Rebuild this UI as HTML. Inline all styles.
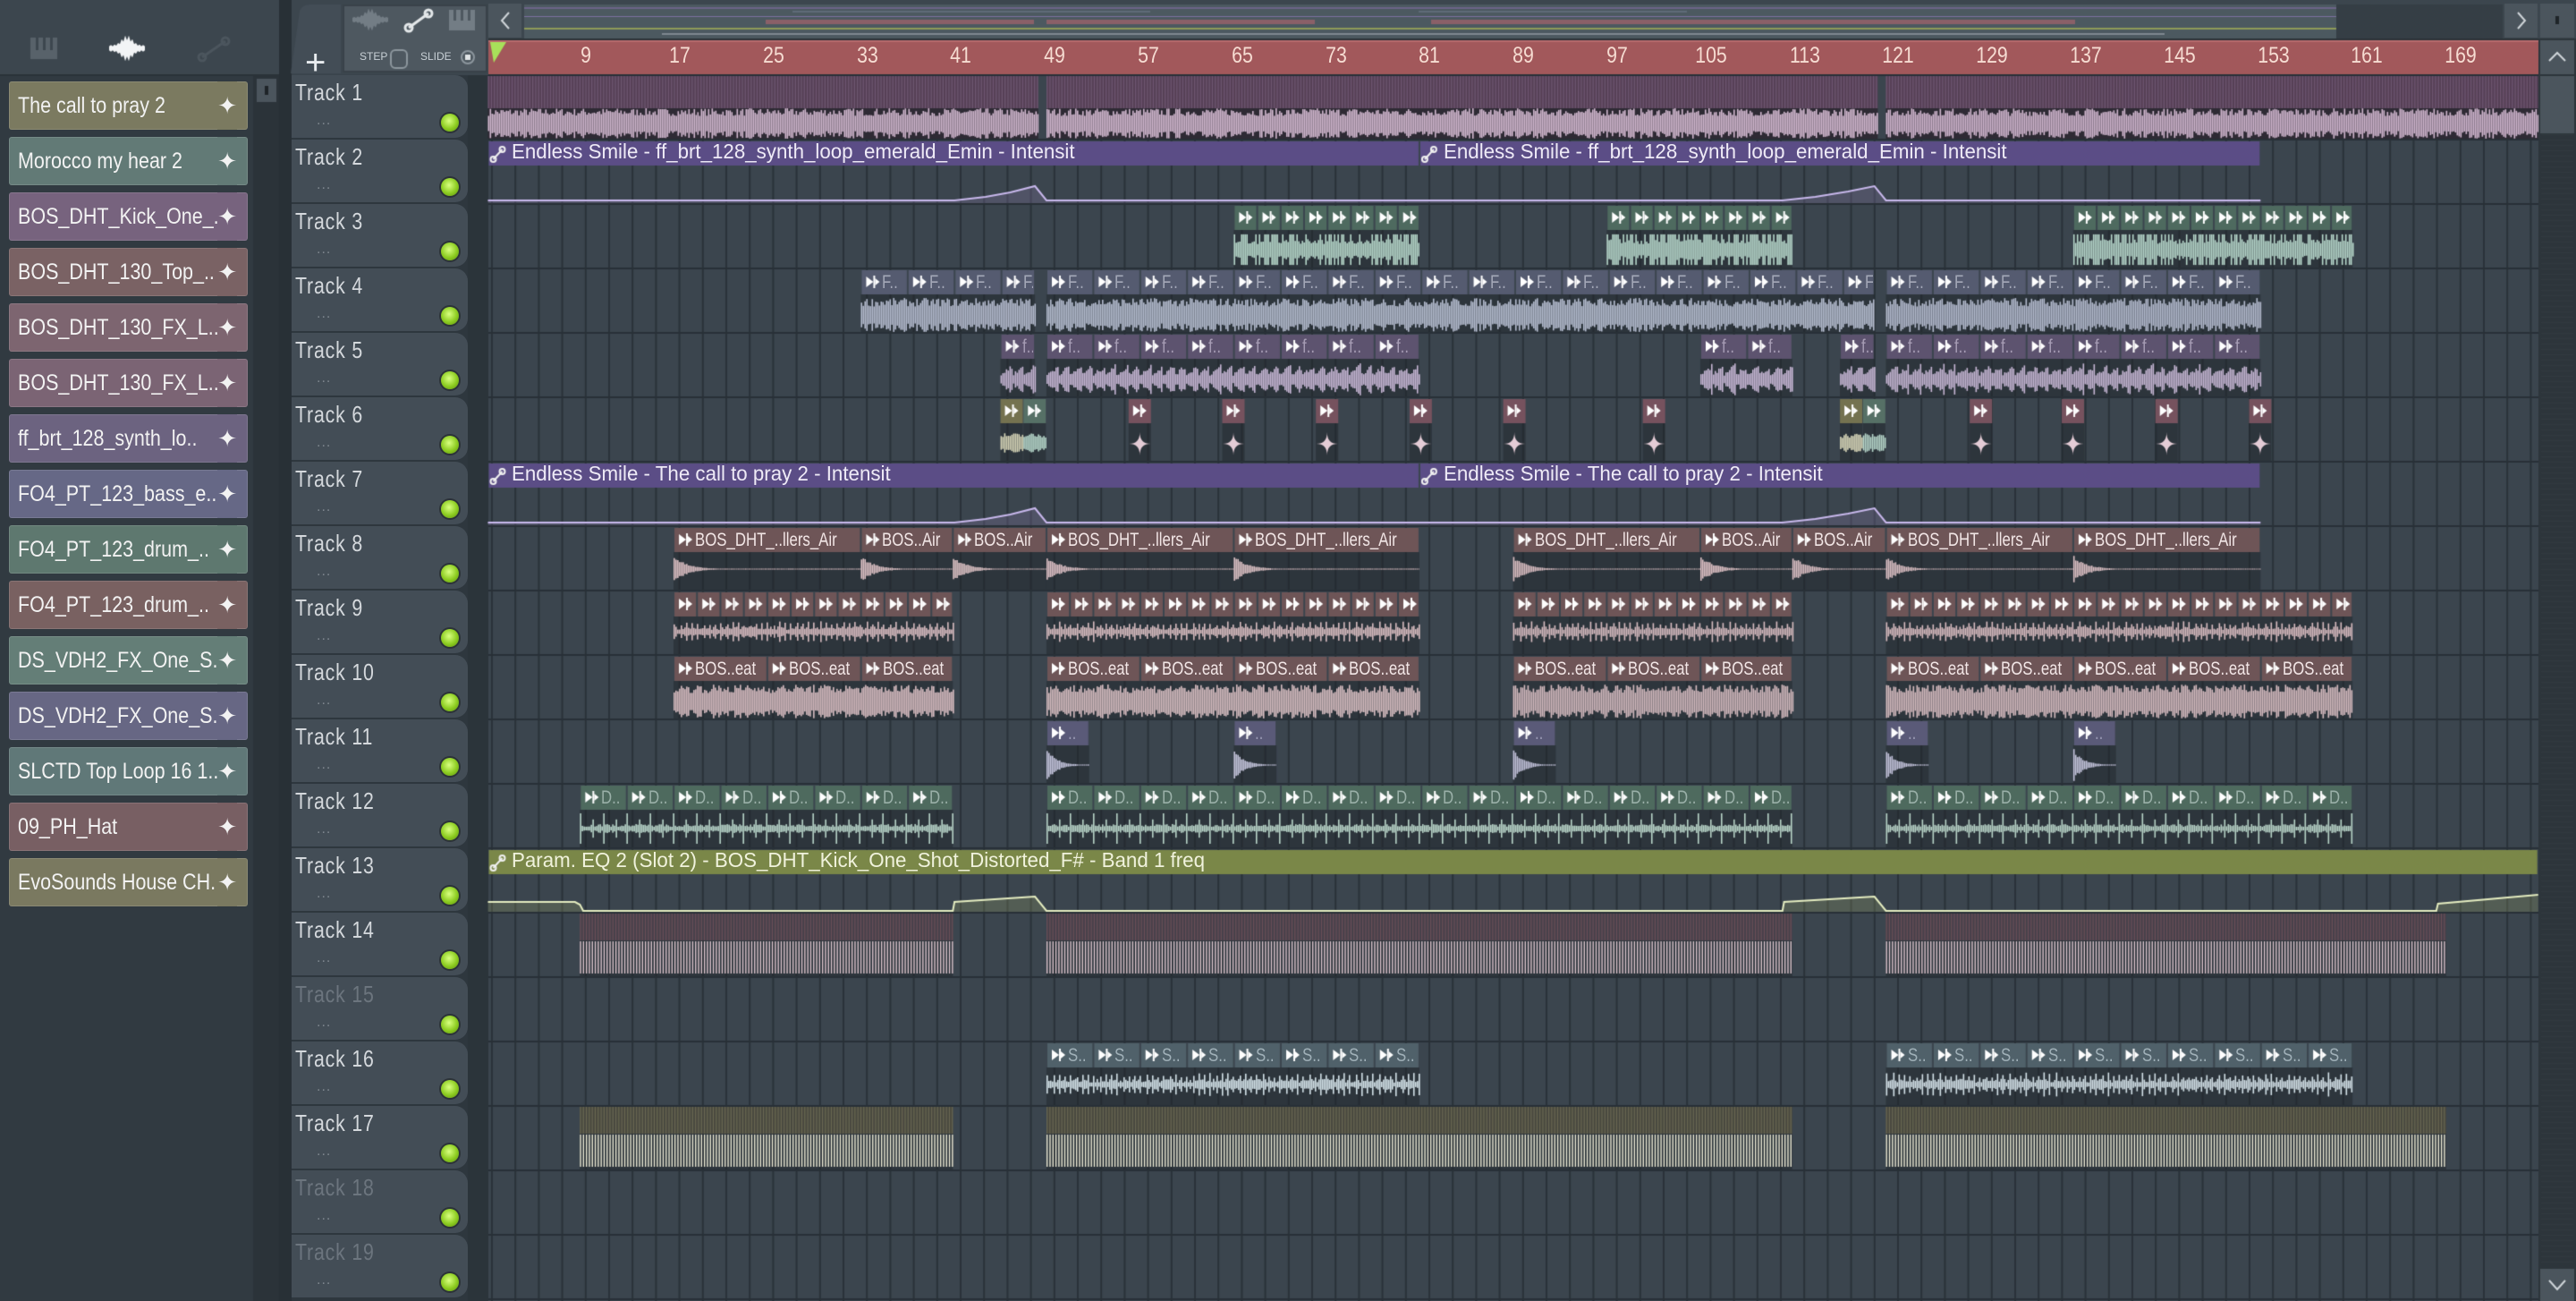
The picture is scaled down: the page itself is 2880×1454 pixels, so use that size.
<!DOCTYPE html>
<html><head><meta charset="utf-8">
<style>
*{margin:0;padding:0;box-sizing:border-box}
html,body{width:2880px;height:1454px;overflow:hidden;background:#3a444c;font-family:"Liberation Sans",sans-serif}
#cv{position:absolute;left:0;top:0}
.a{position:absolute;white-space:nowrap}
.bi{position:absolute;left:10px;width:267px;height:54px;border-radius:3px;color:#f2f2f2;font-size:25px;line-height:54px;box-shadow:inset 0 0 0 1px rgba(255,255,255,.12);overflow:hidden}
.bi em{position:absolute;left:10px;top:0;font-style:normal;white-space:nowrap;transform:scaleX(.86);transform-origin:left}
.bi span{position:absolute;right:12px;top:0;font-size:26px;background:inherit}
.th{position:absolute;left:326px;width:197px;height:70px;background:#434d56;border-radius:0 14px 14px 0}
.th b{position:absolute;left:4px;top:4px;font-weight:normal;font-size:26px;color:#d4d8dc;letter-spacing:1px;white-space:nowrap;transform:scaleX(.82);transform-origin:left}
.th i{position:absolute;left:28px;top:42px;font-style:normal;font-size:16px;color:#7e868e;letter-spacing:1px}
.th u{position:absolute;left:167px;top:43px;width:20px;height:20px;border-radius:50%;background:radial-gradient(circle at 45% 40%,#d8ff80,#8ccc20 55%,#5a8a10);box-shadow:0 0 0 2px #2c3338}
.th.d b{color:#6c757e}
.rl{position:absolute;top:48px;font-size:25px;color:#f6dcd2;transform:translateX(-50%) scaleX(.85)}
.cl{position:absolute;font-size:21px;line-height:27px;white-space:nowrap;overflow:hidden}
.cl span{display:inline-block;transform:scaleX(.8);transform-origin:left}
.al{position:absolute;font-size:23px;line-height:27px;white-space:nowrap;transform:scaleX(.97);transform-origin:left}
</style></head><body>
<canvas id="cv" width="2880" height="1454"></canvas>

<div class="bi" style="top:91px;background:#7b7a60"><em>The call to pray 2</em><span>✦</span></div>
<div class="bi" style="top:153px;background:#627a76"><em>Morocco my hear 2</em><span>✦</span></div>
<div class="bi" style="top:215px;background:#77637e"><em>BOS_DHT_Kick_One_..</em><span>✦</span></div>
<div class="bi" style="top:277px;background:#7a6264"><em>BOS_DHT_130_Top_..</em><span>✦</span></div>
<div class="bi" style="top:339px;background:#7d6570"><em>BOS_DHT_130_FX_L..</em><span>✦</span></div>
<div class="bi" style="top:401px;background:#7b6474"><em>BOS_DHT_130_FX_L..</em><span>✦</span></div>
<div class="bi" style="top:463px;background:#6c6380"><em>ff_brt_128_synth_lo..</em><span>✦</span></div>
<div class="bi" style="top:525px;background:#666886"><em>FO4_PT_123_bass_e..</em><span>✦</span></div>
<div class="bi" style="top:587px;background:#5e786f"><em>FO4_PT_123_drum_..</em><span>✦</span></div>
<div class="bi" style="top:649px;background:#796161"><em>FO4_PT_123_drum_..</em><span>✦</span></div>
<div class="bi" style="top:711px;background:#647e77"><em>DS_VDH2_FX_One_S..</em><span>✦</span></div>
<div class="bi" style="top:773px;background:#676784"><em>DS_VDH2_FX_One_S..</em><span>✦</span></div>
<div class="bi" style="top:835px;background:#607878"><em>SLCTD Top Loop 16 1..</em><span>✦</span></div>
<div class="bi" style="top:897px;background:#785f63"><em>09_PH_Hat</em><span>✦</span></div>
<div class="bi" style="top:959px;background:#7a7960"><em>EvoSounds House CH..</em><span>✦</span></div>

<div class="a" style="left:341px;top:48px;font-size:40px;color:#e8ecef">+</div>
<div class="a" style="left:402px;top:56px;font-size:12px;color:#c8d0d6">STEP</div>
<div class="a" style="left:470px;top:56px;font-size:12px;color:#c8d0d6">SLIDE</div>

<div class="rl" style="left:655px">9</div><div class="rl" style="left:760px">17</div><div class="rl" style="left:865px">25</div><div class="rl" style="left:970px">33</div><div class="rl" style="left:1074px">41</div><div class="rl" style="left:1179px">49</div><div class="rl" style="left:1284px">57</div><div class="rl" style="left:1389px">65</div><div class="rl" style="left:1494px">73</div><div class="rl" style="left:1598px">81</div><div class="rl" style="left:1703px">89</div><div class="rl" style="left:1808px">97</div><div class="rl" style="left:1913px">105</div><div class="rl" style="left:2018px">113</div><div class="rl" style="left:2122px">121</div><div class="rl" style="left:2227px">129</div><div class="rl" style="left:2332px">137</div><div class="rl" style="left:2437px">145</div><div class="rl" style="left:2542px">153</div><div class="rl" style="left:2646px">161</div><div class="rl" style="left:2751px">169</div>

<div class="th" style="top:84px"><b>Track 1</b><i>...</i><u></u></div>
<div class="th" style="top:156px"><b>Track 2</b><i>...</i><u></u></div>
<div class="th" style="top:228px"><b>Track 3</b><i>...</i><u></u></div>
<div class="th" style="top:300px"><b>Track 4</b><i>...</i><u></u></div>
<div class="th" style="top:372px"><b>Track 5</b><i>...</i><u></u></div>
<div class="th" style="top:444px"><b>Track 6</b><i>...</i><u></u></div>
<div class="th" style="top:516px"><b>Track 7</b><i>...</i><u></u></div>
<div class="th" style="top:588px"><b>Track 8</b><i>...</i><u></u></div>
<div class="th" style="top:660px"><b>Track 9</b><i>...</i><u></u></div>
<div class="th" style="top:732px"><b>Track 10</b><i>...</i><u></u></div>
<div class="th" style="top:804px"><b>Track 11</b><i>...</i><u></u></div>
<div class="th" style="top:876px"><b>Track 12</b><i>...</i><u></u></div>
<div class="th" style="top:948px"><b>Track 13</b><i>...</i><u></u></div>
<div class="th" style="top:1020px"><b>Track 14</b><i>...</i><u></u></div>
<div class="th d" style="top:1092px"><b>Track 15</b><i>...</i><u></u></div>
<div class="th" style="top:1164px"><b>Track 16</b><i>...</i><u></u></div>
<div class="th" style="top:1236px"><b>Track 17</b><i>...</i><u></u></div>
<div class="th d" style="top:1308px"><b>Track 18</b><i>...</i><u></u></div>
<div class="th d" style="top:1380px"><b>Track 19</b><i>...</i><u></u></div>

<div class="al" style="left:572px;top:156px;color:#eeeaf6">Endless Smile - ff_brt_128_synth_loop_emerald_Emin - Intensit</div>
<div class="al" style="left:1614px;top:156px;color:#eeeaf6">Endless Smile - ff_brt_128_synth_loop_emerald_Emin - Intensit</div>
<div class="al" style="left:572px;top:516px;color:#eeeaf6">Endless Smile - The call to pray 2 - Intensit</div>
<div class="al" style="left:1614px;top:516px;color:#eeeaf6">Endless Smile - The call to pray 2 - Intensit</div>
<div class="al" style="left:572px;top:948px;color:#f0f2dc">Param. EQ 2 (Slot 2) - BOS_DHT_Kick_One_Shot_Distorted_F# - Band 1 freq</div>

<div id="lb"></div>

<script>
const S=1.8367,P=x=>x*S;
const c=document.getElementById('cv'),g=c.getContext('2d');
function R(x,y,w,h,col){g.fillStyle=col;g.fillRect(x,y,w,h);}
let seed=7;function rnd(){seed=(seed*16807)%2147483647;return seed/2147483647;}
const lb=document.getElementById('lb');
function label(x,y,w,t,col){const d=document.createElement('div');d.className='cl';d.style.left=x+'px';d.style.top=y+'px';d.style.width=w+'px';d.style.color=col;const s=document.createElement('span');s.textContent=t;d.appendChild(s);lb.appendChild(d);}

R(0,0,2880,84,'#3c464e');
R(0,83,312,2,'#2a3238');
R(0,85,283,1369,'#313a41');
R(283,85,29,1369,'#2b3339');
R(287,88,22,26,'#4b555d');R(296,96,4,10,'#1e2428');
R(312,0,14,1454,'#283036');
R(326,84,220,1370,'#2e373e');
R(523,84,23,1370,'#2b343a');
R(34,42,30,24,'#58626a');R(40,42,3,14,'#3c464e');R(48,42,3,14,'#3c464e');R(56,42,3,14,'#3c464e');
function wav(cx,cy,w,h,col){g.fillStyle=col;g.beginPath();g.moveTo(cx-w/2,cy);for(let i=0;i<=20;i++){const x=cx-w/2+i*w/20;const a=h/2*(0.25+0.75*Math.exp(-Math.pow((i-10)/4,2)))*(i%2?1:0.6);g.lineTo(x,cy-a);}for(let i=20;i>=0;i--){const x=cx-w/2+i*w/20;const a=h/2*(0.25+0.75*Math.exp(-Math.pow((i-10)/4,2)))*(i%2?1:0.6);g.lineTo(x,cy+a);}g.fill();}
wav(142,54,40,30,'#f2f4f6');
function autoIcon(x1,y1,x2,y2,r,col,lw){g.strokeStyle=col;g.lineWidth=lw;g.beginPath();g.moveTo(x1,y1);g.lineTo(x2,y2);g.stroke();g.beginPath();g.arc(x1,y1,r,0,7);g.stroke();g.beginPath();g.arc(x2,y2,r,0,7);g.stroke();}
autoIcon(226,64,252,46,4,'#4c565e',3);
g.fillStyle='#434d56';g.beginPath();g.moveTo(325,82);g.lineTo(335,12);g.quadraticCurveTo(338,5,346,5);g.lineTo(381,5);g.lineTo(381,82);g.fill();
R(383,5,162,76,'#4e5860');g.strokeStyle='#394249';g.lineWidth=2;g.strokeRect(384,6,160,74);
wav(414,22,40,26,'#737d85');
autoIcon(457,31,479,15,4,'#e4e8ea',3);
R(502,11,29,23,'#737d85');R(507,11,3,12,'#4e5860');R(515,11,3,12,'#4e5860');R(523,11,3,12,'#4e5860');
g.strokeStyle='#8d979e';g.lineWidth=2;g.beginPath();g.roundRect(437,56,18,20,5);g.stroke();
g.beginPath();g.arc(523,64,7,0,7);g.stroke();R(520,61,6,6,'#e0e4e6');
R(546,4,37,38,'#4b555d');g.strokeStyle='#d0d6da';g.lineWidth=2;g.beginPath();g.moveTo(569,14);g.lineTo(561,23);g.lineTo(569,32);g.stroke();
R(2800,4,37,38,'#4b555d');g.beginPath();g.moveTo(2815,14);g.lineTo(2823,23);g.lineTo(2815,32);g.stroke();
R(2840,4,38,38,'#4b555d');R(2857,18,4,9,'#1e2428');
R(586,5,2026,38,'#4c5960');R(2612,5,186,38,'#353e45');
R(586,8,2026,2,'#6d6488');R(586,18,2026,1,'#7c70a0');
R(586+300,12,400,2,'#5f6a78');R(586+1000,12,300,2,'#5f6a78');
R(856,22,300,5,'#8a6068');R(1170,22,300,5,'#8a6068');R(1600,22,300,5,'#8a6068');R(1900,22,420,5,'#8a6068');
R(586,31,2026,2,'#8e9a58');R(740,37,1000,2,'#7f8890');R(1720,37,700,2,'#7f8890');
R(546,43,2292,2,'#2b3338');R(546,45,2292,38,'#a2585b');R(546,45,2292,2,'#b86a6c');
g.fillStyle='#a8e05a';g.beginPath();g.moveTo(548,47);g.lineTo(566,47);g.lineTo(552,70);g.fill();
R(2838,43,42,1411,'#2d353b');R(2840,45,38,38,'#4b555d');g.beginPath();g.moveTo(2850,68);g.lineTo(2859,59);g.lineTo(2868,68);g.stroke();
R(2840,85,38,64,'#4b555d');R(2840,1418,38,36,'#4b555d');g.beginPath();g.moveTo(2850,1431);g.lineTo(2859,1441);g.lineTo(2868,1431);g.stroke();
for(let y=150;y<1416;y+=6){R(2841,y,36,1,'#313a40');}

R(546,84,2292,1370,'#3b454e');
for(let k=0;;k++){const x=550+k*26.2;if(x>2838)break;R(x-1,84,2,1370,'#2a3239');}
for(let i=0;i<=19;i++){R(546,84+72*i-1,2292,2,'#283037');}

function Y(r){return 84+72*(r-1);}
function icon(x,cy,col){g.fillStyle=col||'#ffffff';g.beginPath();g.moveTo(x,cy-6);g.lineTo(x+8,cy);g.lineTo(x,cy+6);g.fill();R(x+8,cy-7,2,14,col||'#fff');g.beginPath();g.moveTo(x+10,cy-4);g.lineTo(x+15,cy);g.lineTo(x+10,cy+4);g.fill();}
function wave(s,e,top,h,type,col,segStart,segLen){g.fillStyle=col;const cy=top+h/2;
 for(let x=s;x<e;x+=2){let a;
  if(type=='noise')a=h/2*(0.5+0.5*rnd());
  else if(type=='spiky')a=h/2*(rnd()<0.5?0.95:0.35+0.3*rnd());
  else if(type=='pump'){const p=((x-s)%13)/13;a=h/2*(0.35+0.65*p)*(0.6+0.4*rnd());}
  else if(type=='decay'){const t=(x-segStart)/segLen;a=h/2*Math.max(Math.exp(-4*t),0.04)*(0.7+0.3*rnd());}
  else if(type=='kick'){const p=(x-s)%13;a=p<2?h/2*(((x-s)%26)<2?1:0.6):h/2*0.18*rnd()+2;}
  else if(type=='hat'){const p=(x-s)%6.5;a=p<2?h/2*(0.5+0.4*rnd()):h/2*0.3*rnd()+2;}
  g.fillRect(x,cy-a,1.6,2*a);}}
function hclip(r,x1p,x2p,o){const x1=P(x1p),x2=P(x2p),y0=Y(r);
 R(x1,y0+29,x2-x1,42,'rgba(34,40,46,0.55)');
 for(let s=x1;s<x2-2;s+=o.seg){const e=Math.min(s+o.seg,x2);
  R(s+1,y0+2,e-s-2,27,o.hc);icon(s+6,y0+15);
  if(o.label&&e-s>30)label(s+24,y0+2,e-s-26,o.label,o.lc);
  if(o.type=='decay')wave(s,e,y0+33,o.wh||34,'decay',o.wc,s,o.dl||(e-s));
 }
 if(o.type!='decay')wave(x1,x2,y0+33,o.wh||34,o.type,o.wc);
}
function stripes(r,x1p,x2p,topBg,topLn,botLn){const x1=P(x1p),x2=P(x2p),y0=Y(r);
 R(x1,y0+1,x2-x1,30,topBg);for(let x=x1;x<x2;x+=3.3)R(x,y0+1,1.2,30,topLn);
 R(x1,y0+31,x2-x1,40,'rgba(34,40,46,0.55)');for(let x=x1;x<x2;x+=3.3)R(x,y0+32,1.4,36,botLn);}
function aclip(r,x1p,x2p,col){const x1=P(x1p),x2=P(x2p),y0=Y(r);R(x1+1,y0+2,x2-x1-2,27,col);autoIcon(x1+6,y0+22,x1+16,y0+11,3,'#f0f0f0',2);}
function aline(r,pts,col,fill){const y0=Y(r);g.fillStyle=fill;g.beginPath();g.moveTo(P(pts[0][0]),y0+71);pts.forEach(p=>g.lineTo(P(p[0]),y0+p[1]));g.lineTo(P(pts[pts.length-1][0]),y0+71);g.fill();
 g.strokeStyle=col;g.lineWidth=2;g.beginPath();pts.forEach((p,i)=>i?g.lineTo(P(p[0]),y0+p[1]):g.moveTo(P(p[0]),y0+p[1]));g.stroke();}

[[297,632],[637,1143],[1148,1545]].forEach(([a,b])=>{const x1=P(a),x2=P(b),y0=Y(1);
 R(x1,y0+1,x2-x1,36,'#553f55');for(let x=x1;x<x2;x+=3.3)R(x,y0+1,1.3,36,'#6d5670');
 R(x1,y0+37,x2-x1,34,'#2e2a34');wave(x1,x2,y0+37,34,'noise','#d2b8d0');});
[2,7].forEach(r=>{aline(r,[[297,68],[581,68],[600,64],[615,59],[630,52],[637,68],[1085,68],[1105,64],[1125,58],[1141,52],[1148,68],[1376,68]],'#c8b8ec','rgba(120,110,150,0.35)');aclip(r,297,864,'#5b4d86');aclip(r,864,1376,'#5b4d86');});
[[751,864],[978,1091],[1262,1432]].forEach(([a,b])=>hclip(3,a,b,{seg:26.2,hc:'#4e6a5f',type:'spiky',wc:'#b6d6ca',wh:36}));
[[524,630],[637,1141],[1148,1376]].forEach(([a,b])=>hclip(4,a,b,{seg:52.4,hc:'#555b70',label:'F..',lc:'#a4a8b8',type:'noise',wc:'#b5bccf',wh:38}));
[[609,630],[637,864],[1035,1091],[1120,1141],[1148,1376]].forEach(([a,b])=>hclip(5,a,b,{seg:52.4,hc:'#5d536f',label:'f..',lc:'#a69cb4',type:'pump',wc:'#c6b6d4',wh:38}));
function small(r,xp,hc,kind,wc){const x1=P(xp),w=25,y0=Y(r);R(x1,y0+29,w,42,'rgba(34,40,46,0.55)');R(x1,y0+2,w,27,hc);icon(x1+5,y0+15);
 if(kind=='star'){const cx=x1+w/2,cy=y0+52;g.fillStyle=wc;g.beginPath();g.moveTo(cx,cy-13);g.quadraticCurveTo(cx,cy,cx+12,cy);g.quadraticCurveTo(cx,cy,cx,cy+13);g.quadraticCurveTo(cx,cy,cx-12,cy);g.quadraticCurveTo(cx,cy,cx,cy-13);g.fill();}
 else wave(x1,x1+w,y0+40,22,'noise',wc);}
small(6,609,'#747250','w','#d8d6b8');small(6,623,'#567066','w','#b8d8cc');
small(6,1120,'#747250','w','#d8d6b8');small(6,1134,'#567066','w','#b8d8cc');
[687,744,801,858,915,1000,1199,1255,1312,1369].forEach(x=>small(6,x,'#76525e','star','#e4ccd6'));
[[410,524],[524,580],[580,637],[637,751],[751,864],[921,1035],[1035,1091],[1091,1148],[1148,1262],[1262,1376]].forEach(([a,b])=>{const long=(b-a)>80;hclip(8,a,b,{seg:P(b)-P(a)+1,hc:'#6e5557',label:long?'BOS_DHT_..llers_Air':'BOS..Air',lc:'#f2e6e6',type:'decay',wc:'#dcc0c4',wh:30,dl:60});});
[[410,580],[637,864],[921,1091],[1148,1432]].forEach(([a,b])=>hclip(9,a,b,{seg:26.2,hc:'#6e5557',type:'hat',wc:'#d8bcc0',wh:26}));
[[410,580],[637,864],[921,1091],[1148,1432]].forEach(([a,b])=>hclip(10,a,b,{seg:104.8,hc:'#6e5557',label:'BOS..eat',lc:'#f2e6e6',type:'noise',wc:'#d6bcc0',wh:38}));
[637,751,921,1148,1262].forEach(x=>hclip(11,x,x+26,{seg:48,hc:'#5a5a78',label:'..',lc:'#9a9ab4',type:'decay',wc:'#c4c4dc',wh:36,dl:45}));
[[353,580],[637,1091],[1148,1432]].forEach(([a,b])=>hclip(12,a,b,{seg:52.4,hc:'#4e6a5e',label:'D..',lc:'#9ab0a8',type:'kick',wc:'#b8d4c8',wh:34}));
aline(13,[[297,60],[350,60],[353,63],[355,70],[580,70],[581,60],[630,54],[637,70],[1085,70],[1086,60],[1141,54],[1148,70],[1483,70],[1484,62],[1545,52]],'#e4ecc0','rgba(140,150,100,0.3)');
aclip(13,297,1545,'#7a8748');
[[353,580],[637,1091],[1148,1489]].forEach(([a,b])=>stripes(14,a,b,'#47404a','#6a4f58','#dcc4cc'));
[[637,864],[1148,1432]].forEach(([a,b])=>hclip(16,a,b,{seg:52.4,hc:'#50616a',label:'S..',lc:'#a0b0b8',type:'hat',wc:'#d4e2e8',wh:30}));
[[353,580],[637,1091],[1148,1489]].forEach(([a,b])=>stripes(17,a,b,'#48483f','#6a6852','#ecead4'));
</script>
</body></html>
